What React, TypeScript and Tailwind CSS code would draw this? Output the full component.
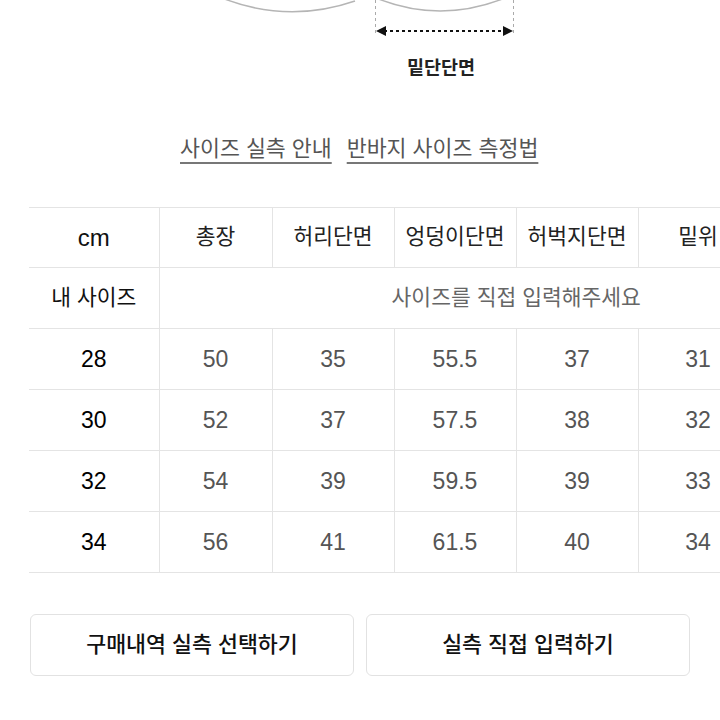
import React from "react"

const headers = ["총장", "허리단면", "엉덩이단면", "허벅지단면", "밑위", "밑단단면"]

const rows = [
  { size: "28", values: ["50", "35", "55.5", "37", "31", "24"] },
  { size: "30", values: ["52", "37", "57.5", "38", "32", "25"] },
  { size: "32", values: ["54", "39", "59.5", "39", "33", "26"] },
  { size: "34", values: ["56", "41", "61.5", "40", "34", "27"] },
]

const colWidths = ["w-[130px]", "w-[113px]", "w-[122px]", "w-[122px]", "w-[122px]", "w-[120px]", "w-[115px]"]

export default function App() {
  return (
    <div
      className="w-[720px] h-[720px] overflow-hidden bg-white text-[#222]"
      style={{ fontFamily: '"Liberation Sans", "Noto Sans CJK KR", sans-serif' }}
    >
      {/* 다이어그램 하단 */}
      <svg width="720" height="45" viewBox="0 0 720 45" className="block">
        <path d="M222 -2 Q288 24 355 1" fill="none" stroke="#b5b5b5" strokeWidth="1.5" />
        <path d="M376 -2 Q440 24 505 -2" fill="none" stroke="#b5b5b5" strokeWidth="1.5" />
        <line x1="375.5" y1="0" x2="375.5" y2="36" stroke="#aaa" strokeDasharray="3 3" />
        <line x1="513.5" y1="0" x2="513.5" y2="36" stroke="#aaa" strokeDasharray="3 3" />
        <line x1="384" y1="31" x2="506" y2="31" stroke="#111" strokeWidth="2" strokeDasharray="3 3" />
        <polygon points="376,31 386,26 386,36" fill="#111" />
        <polygon points="513,31 503,26 503,36" fill="#111" />
      </svg>

      <div className="mt-[10px] pl-[407px]">
        <span className="text-[18.5px] font-bold text-[#222] leading-[26px]">밑단단면</span>
      </div>

      <div className="mt-[54px] flex gap-[15px] pl-[180px] text-[21.7px] text-[#555] leading-[28px]">
        <span className="underline underline-offset-[6px] decoration-[2px] decoration-[#777]">사이즈 실측 안내</span>
        <span className="underline underline-offset-[6px] decoration-[2px] decoration-[#777]">반바지 사이즈 측정법</span>
      </div>

      <div className="mt-[44px] pl-[29px]">
        <table className="border-collapse table-fixed w-[844px] border-t border-[#e4e4e4]">
          <colgroup>
            {colWidths.map((w, i) => (
              <col key={i} className={w} />
            ))}
          </colgroup>
          <tbody>
            <tr className="h-[60px] border-b border-[#e4e4e4]">
              <td className="text-center text-[24px] text-[#111]">cm</td>
              {headers.map((h) => (
                <td key={h} className="text-center text-[21.5px] text-[#222] border-l border-[#e4e4e4]">
                  {h}
                </td>
              ))}
            </tr>
            <tr className="h-[61px] border-b border-[#e4e4e4]">
              <td className="text-center text-[21.5px] text-[#111]">내 사이즈</td>
              <td colSpan={6} className="text-center text-[21.5px] text-[#666] border-l border-[#e4e4e4]">
                사이즈를 직접 입력해주세요
              </td>
            </tr>
            {rows.map((r) => (
              <tr key={r.size} className="h-[61px] border-b border-[#e4e4e4]">
                <td className="text-center text-[23px] text-black">{r.size}</td>
                {r.values.map((v, i) => (
                  <td key={i} className="text-center text-[23px] text-[#555] border-l border-[#e4e4e4]">
                    {v}
                  </td>
                ))}
              </tr>
            ))}
          </tbody>
        </table>
      </div>

      <div className="mt-[41px] flex gap-[12px] pl-[30px]">
        <button className="w-[324px] h-[62px] rounded-[6px] border border-[#e2e2e2] bg-white text-[21.7px] font-medium text-[#111]">
          구매내역 실측 선택하기
        </button>
        <button className="w-[324px] h-[62px] rounded-[6px] border border-[#e2e2e2] bg-white text-[21.7px] font-medium text-[#111]">
          실측 직접 입력하기
        </button>
      </div>
    </div>
  )
}
